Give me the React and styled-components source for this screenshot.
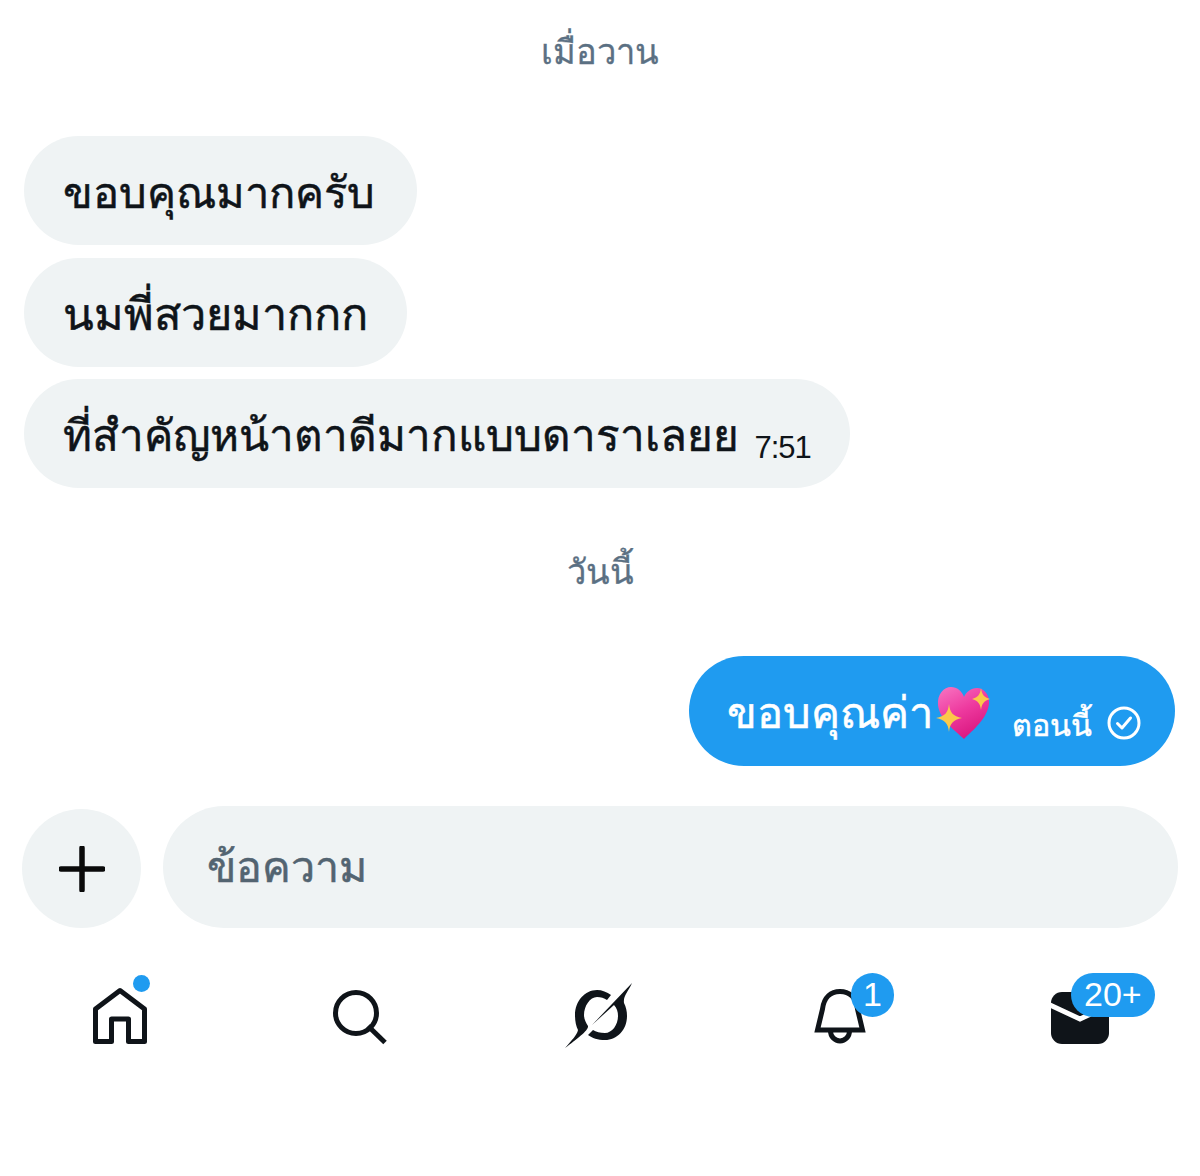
import styled, { createGlobalStyle } from "styled-components";

const Global = createGlobalStyle`
html, body { margin: 0; padding: 0; background: #fff; }
body { font-family: "Liberation Sans", "Noto Sans", "DejaVu Sans", sans-serif; }
`;

const Page = styled.div`
width: 1200px;
height: 1176px;
overflow: hidden;
display: flex;
flex-direction: column;
padding: 24px 24px 0;
box-sizing: border-box;
`;

const DateLabel = styled.div`
height: 56px;
line-height: 56px;
text-align: center;
font-size: 34.5px;
color: #5b7083;
-webkit-text-stroke: 0.3px #5b7083;
margin-top: ${(p) => p.$before}px;
margin-bottom: ${(p) => p.$after}px;
`;

const Thread = styled.div`
display: flex;
flex-direction: column;
align-items: flex-start;
gap: 12.5px;
`;

const Bubble = styled.div`
height: ${(p) => (p.$mine ? 110 : 109)}px;
min-width: ${(p) => p.$minWidth || 0}px;
border-radius: 55px;
box-sizing: border-box;
padding: ${(p) => (p.$mine ? "3px 34px 0 38px" : "3px 39px 0 38.5px")};
display: flex;
align-items: center;
background: ${(p) => (p.$mine ? "#1f9bf0" : "#eff3f4")};
color: ${(p) => (p.$mine ? "#fff" : "#0f1419")};
-webkit-text-stroke: 0.5px ${(p) => (p.$mine ? "#fff" : "#0f1419")};
font-size: ${(p) => p.$size || 44}px;
white-space: nowrap;
`;

const Time = styled.span`
font-size: 31px;
letter-spacing: -1px;
margin-left: 16px;
margin-top: 26px;
-webkit-text-stroke: 0;
`;

const MineRow = styled.div`
display: flex;
justify-content: flex-end;
margin-right: 1px;
`;

const Sent = styled.span`
font-size: 30.5px;
margin-left: 20px;
margin-top: 24px;
`;

const Composer = styled.div`
display: flex;
align-items: flex-end;
gap: 22px;
margin: 40px -2px 0 -2px;
`;

const AddButton = styled.div`
width: 119px;
height: 119px;
flex: none;
border-radius: 50%;
background: #eff3f4;
display: flex;
align-items: center;
justify-content: center;
`;

const Input = styled.div`
flex: 1;
height: 122px;
border-radius: 61px;
background: #eff3f4;
display: flex;
align-items: center;
padding-left: 44px;
font-size: 43px;
color: #536471;
-webkit-text-stroke: 0.5px #536471;
`;

const TabBar = styled.div`
display: grid;
grid-template-columns: repeat(5, 240px);
margin: 43px 0 0 -24px;
`;

const Tab = styled.div`
position: relative;
height: 90px;
display: flex;
align-items: center;
justify-content: center;
`;

const Dot = styled.span`
position: absolute;
left: 133px;
top: 4px;
width: 17px;
height: 17px;
border-radius: 50%;
background: #1f9bf0;
`;

const Badge = styled.span`
position: absolute;
left: ${(p) => p.$left}px;
top: 2px;
height: 44px;
min-width: 43px;
padding: 0 ${(p) => p.$pad}px;
box-sizing: border-box;
border-radius: 22px;
background: #1f9bf0;
color: #fff;
font-size: 34px;
line-height: 42px;
text-align: center;
`;

const HeartSparkles = () => (
  <svg width="56" height="58" viewBox="0 0 56 58" style={{ flex: "none", marginLeft: 3, marginTop: 3 }}>
    <defs>
      <linearGradient id="heart" x1="0.1" y1="0" x2="0.6" y2="1">
        <stop offset="0" stopColor="#f772c0" />
        <stop offset="0.5" stopColor="#ee3a9f" />
        <stop offset="1" stopColor="#d9167f" />
      </linearGradient>
    </defs>
    <path d="M28 54C20 46 4 36 2 20C1 9 8 2 15 2C21 2 26 6 28 12C30 7 35 3 41 3C48 3 54 10 53 19C51 34 37 45 28 54Z" fill="url(#heart)" />
    <path d="M45 3C46 10 48 12 54 14C48 16 46 18 45 25C44 18 42 16 36 14C42 12 44 10 45 3Z" fill="#fbc94a" />
    <path d="M13 19C14 28 17 31 26 33C17 35 14 38 13 47C12 38 9 35 0 33C9 31 12 28 13 19Z" fill="#fbc94a" />
  </svg>
);

const SentCheck = () => (
  <svg width="34" height="34" viewBox="0 0 34 34" fill="none" stroke="#fff" strokeWidth="3" style={{ marginLeft: 15, marginTop: 21, flex: "none" }}>
    <circle cx="17" cy="17" r="15" />
    <path d="M10.5 17.5l4.5 4.5 8.5-10" strokeLinecap="round" strokeLinejoin="round" />
  </svg>
);

const Plus = () => (
  <svg width="46" height="46" viewBox="0 0 46 46" stroke="#0a0a0a" strokeWidth="5.5" strokeLinecap="round">
    <path d="M23 2v42M2 23h42" />
  </svg>
);

const HomeIcon = () => (
  <svg width="60" height="60" viewBox="0 0 60 60" fill="none" stroke="#0f1419" strokeWidth="5" strokeLinejoin="round">
    <path d="M30 4.5L5.5 23v32.5h16V33h17v22.5h16V23z" />
  </svg>
);

const SearchIcon = () => (
  <svg width="60" height="60" viewBox="0 0 60 60" fill="none" stroke="#0f1419" strokeWidth="5">
    <circle cx="26" cy="27" r="20.5" />
    <path d="M38 40l17 16.500" />
  </svg>
);

const ExploreIcon = () => (
  <svg width="72" height="72" viewBox="0 0 72 72" fill="#0f1419">
    <path d="M68 3C64 12 59 16 60 23C62 27 63 31 63 36C63 50 53 60 41 60C34 60 28 58 24 55L29 50C32 52 36 53 41 53C48 53 54 45 54 36C54 32 53 28 50 25L28 45Z" />
    <path d="M1 68C8 60 13 55 14 50C12 46 11 41 11 35C11 21 21 10 33 10C38 10 43 12 47 15L43 20C40 18 37 17 33 17C26 17 20 26 20 35C20 39 22 43 24 46C25 50 13 59 1 68Z" />
  </svg>
);

const BellIcon = () => (
  <svg width="60" height="60" viewBox="0 0 60 60" fill="none" stroke="#0f1419" strokeWidth="5">
    <path d="M7.500 44H52.500L47.500 23C46 11 39 5.500 30 5.500S14 11 12.500 23Z" />
    <path d="M20.500 45a9.500 10 0 0 0 19 0" />
  </svg>
);

const MailIcon = () => (
  <svg width="60" height="56" viewBox="0 0 60 56">
    <rect x="1" y="4" width="58" height="52" rx="11" fill="#0f1419" />
    <path d="M0 17l30 14 30-14" fill="none" stroke="#fff" strokeWidth="5" />
  </svg>
);

export default function App() {
  return (
    <Page>
      <Global />
      <DateLabel $before={0} $after={56}>เมื่อวาน</DateLabel>
      <Thread>
        <Bubble $size={43.5} $minWidth={393}>ขอบคุณมากครับ</Bubble>
        <Bubble $size={45} $minWidth={382}>นมพี่สวยมากกก</Bubble>
        <Bubble>
          ที่สำคัญหน้าตาดีมากแบบดาราเลยย
          <Time>7:51</Time>
        </Bubble>
      </Thread>
      <DateLabel $before={56} $after={56}>วันนี้</DateLabel>
      <MineRow>
        <Bubble $mine $size={43.5}>
          ขอบคุณค่า
          <HeartSparkles />
          <Sent>ตอนนี้</Sent>
          <SentCheck />
        </Bubble>
      </MineRow>
      <Composer>
        <AddButton><Plus /></AddButton>
        <Input>ข้อความ</Input>
      </Composer>
      <TabBar>
        <Tab><HomeIcon /><Dot /></Tab>
        <Tab><SearchIcon /></Tab>
        <Tab><ExploreIcon /></Tab>
        <Tab><BellIcon /><Badge $left={131} $pad={0}>1</Badge></Tab>
        <Tab><MailIcon /><Badge $left={111} $pad={13}>20+</Badge></Tab>
      </TabBar>
    </Page>
  );
}
